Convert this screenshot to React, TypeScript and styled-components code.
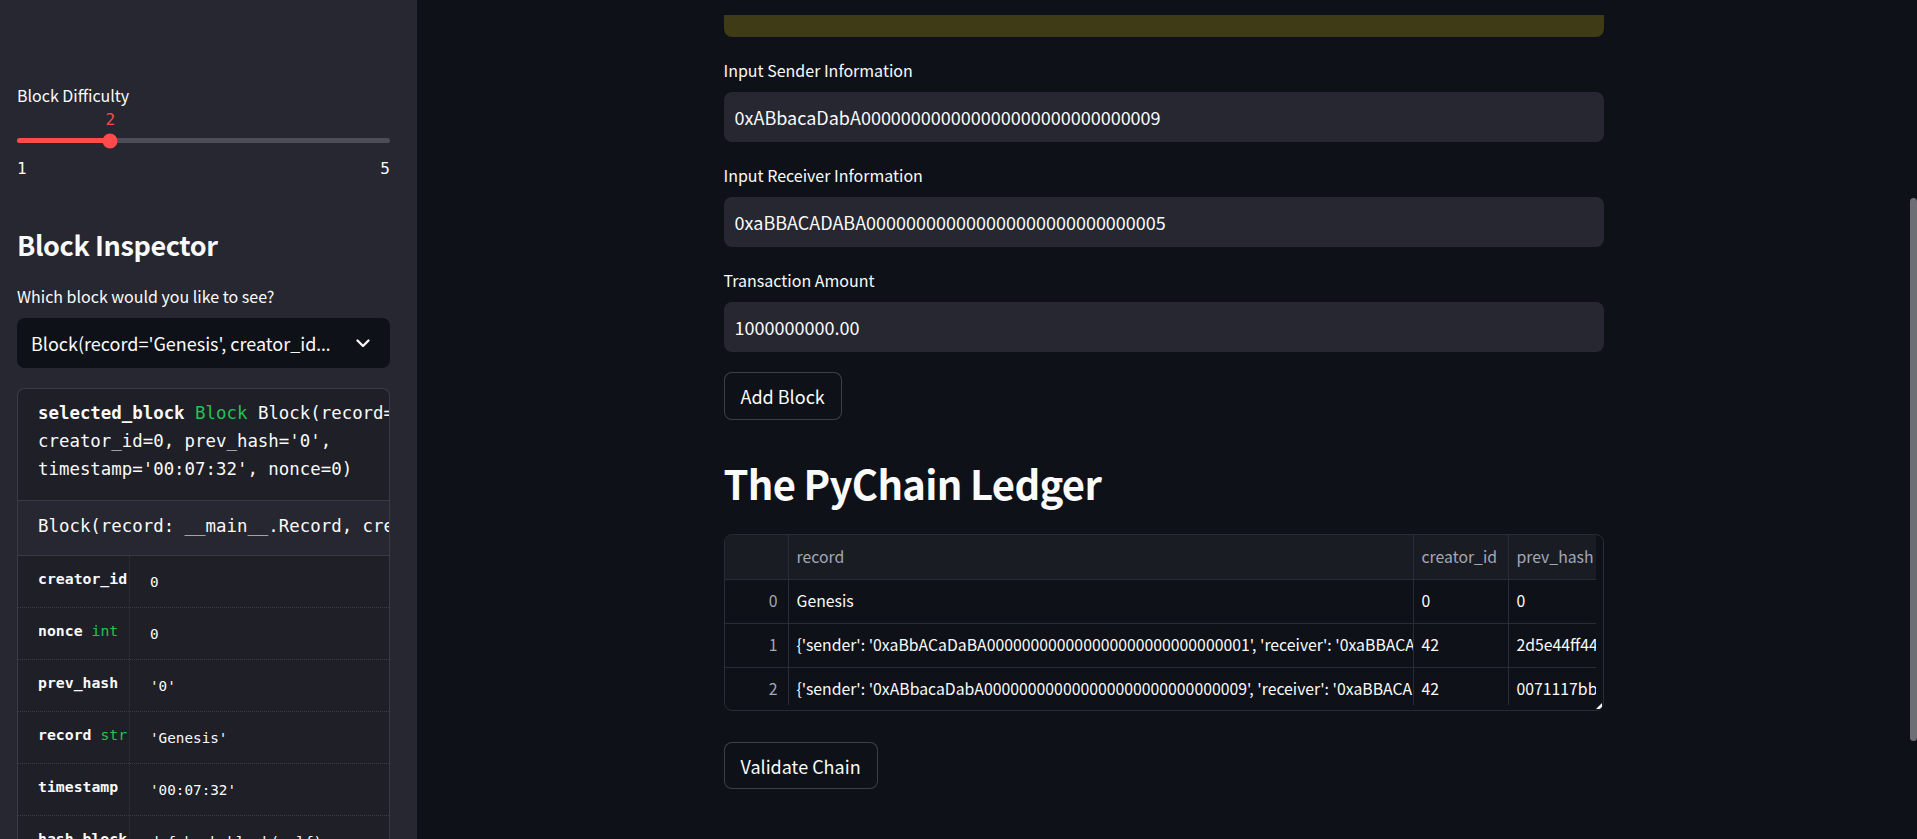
import React from "react";
import styled, { createGlobalStyle } from "styled-components";

const SANS = `"Noto Sans CJK SC", "Noto Sans", sans-serif`;
const LATIN = `"Noto Sans", "Open Sans", sans-serif`;
const MONO = `"DejaVu Sans Mono", "Liberation Mono", monospace`;

const GlobalStyle = createGlobalStyle`
  html, body { margin: 0; padding: 0; background: #0e1117; overflow: hidden; }
  body { font-family: ${SANS}; color: #fafafa; }
  #root { height: 839px; }
  * { box-sizing: border-box; }
`;

const Shell = styled.div`
  display: flex;
  width: 1917px;
  height: 839px;
  overflow: hidden;
`;

/* ---------- sidebar ---------- */

const Sidebar = styled.aside`
  width: 417px;
  flex: none;
  background: #262730;
  padding: 82px 27px 0 17px;
  display: flex;
  flex-direction: column;
  overflow: hidden;
`;

const WidgetLabel = styled.div<{ $mt?: number }>`
  font-size: 16px;
  line-height: 27px;
  color: #fafafa;
  margin-top: ${(p) => p.$mt ?? 0}px;
  margin-bottom: 8px;
  white-space: nowrap;
`;

const SliderArea = styled.div`
  padding-top: 21px;
`;

const Track = styled.div`
  position: relative;
  height: 5px;
  border-radius: 3px;
  background: #4b4d57;
`;

const TrackFill = styled.div`
  height: 100%;
  border-radius: 3px;
  background: #ff4b4b;
`;

const Thumb = styled.div`
  position: absolute;
  top: 50%;
  width: 15px;
  height: 15px;
  border-radius: 50%;
  background: #ff4b4b;
  transform: translate(-50%, -50%);
`;

const ThumbValue = styled.div`
  position: absolute;
  bottom: calc(100% + 8px);
  transform: translateX(-50%);
  font-family: ${MONO};
  font-size: 16px;
  line-height: 20px;
  color: #ff4b4b;
`;

const TickRow = styled.div`
  display: flex;
  justify-content: space-between;
  margin-top: 16px;
  font-family: ${MONO};
  font-size: 16px;
  line-height: 20px;
  color: #fafafa;
`;

const SidebarTitle = styled.h2`
  margin: 46px 0 0;
  font-size: 27px;
  font-weight: 700;
  letter-spacing: -0.4px;
  line-height: 40px;
  color: #fafafa;
`;

const SelectBox = styled.div`
  height: 50px;
  flex: none;
  border-radius: 8px;
  background: #0e1117;
  display: flex;
  align-items: center;
  justify-content: space-between;
  padding: 0 20px 0 14px;
`;

const SelectText = styled.span`
  font-size: 18px;
  white-space: nowrap;
`;

const Ellipsis = styled.span`
  font-family: ${LATIN};
`;

const Panel = styled.div`
  margin-top: 20px;
  flex: 1;
  border: 1px solid #393a44;
  border-bottom: none;
  border-radius: 8px 8px 0 0;
  background: #1e1f27;
  overflow: hidden;
  font-family: ${MONO};
`;

const PanelHead = styled.div`
  padding: 10px 0 17px 20px;
  font-size: 17.4px;
  line-height: 28px;
  white-space: pre;
`;

const Bold = styled.span`
  font-weight: 700;
`;

const TypeTag = styled.span`
  color: #21c354;
  font-weight: 400;
`;

const DocLine = styled.div`
  border-top: 1px solid #393a44;
  border-bottom: 1px solid #393a44;
  background: #262730;
  padding: 11px 0 15px 20px;
  font-size: 17.4px;
  line-height: 28px;
  white-space: pre;
`;

const MemberRow = styled.div`
  display: grid;
  grid-template-columns: 111px 1fr;
  height: 52px;
  border-bottom: 1px dotted #3a3b45;
`;

const MemberName = styled.div`
  padding: 13px 0 0 20px;
  font-size: 14.8px;
  font-weight: 700;
  line-height: 20px;
  white-space: pre;
`;

const MemberValue = styled.div`
  padding: 16px 0 0 20px;
  border-left: 1px dotted #34353f;
  font-size: 14.3px;
  line-height: 20px;
  white-space: pre;
`;

/* ---------- main ---------- */

const Main = styled.main`
  flex: 1;
  min-width: 0;
  display: flex;
`;

const MainScroll = styled.div`
  flex: 1;
  min-width: 0;
  overflow: hidden;
  display: flex;
  justify-content: center;
`;

const Column = styled.div`
  width: 880px;
  flex: none;
  padding-top: 15px;
  display: flex;
  flex-direction: column;
`;

const ScrollTrack = styled.div`
  width: 7px;
  flex: none;
`;

const ScrollThumb = styled.div`
  margin-top: 198px;
  height: 543px;
  border-radius: 4px;
  background: #6e6f74;
`;

const WarningTail = styled.div`
  height: 22px;
  border-radius: 0 0 8px 8px;
  background: #3e3b16;
`;

const Field = styled.div`
  margin-top: 20px;
  display: flex;
  flex-direction: column;
`;

const TextInput = styled.input`
  height: 50px;
  width: 100%;
  border: none;
  outline: none;
  border-radius: 8px;
  background: #262730;
  padding: 0 11px;
  font-family: ${SANS};
  font-size: 18px;
  color: #fafafa;
`;

const Button = styled.button<{ $mt?: number; $h?: number }>`
  align-self: flex-start;
  margin-top: ${(p) => p.$mt ?? 20}px;
  height: ${(p) => p.$h ?? 48}px;
  padding: 0 16px;
  border: 1px solid rgba(250, 250, 250, 0.2);
  border-radius: 8px;
  background: #0e1117;
  font-family: ${SANS};
  font-size: 18px;
  color: #fafafa;
`;

const Heading = styled.h2`
  margin: 36px 0 0;
  font-size: 40px;
  font-weight: 700;
  letter-spacing: -0.7px;
  line-height: 54px;
  color: #fafafa;
`;

const TableFrame = styled.div`
  position: relative;
  margin-top: 24px;
  height: 177px;
  border: 1px solid #2a2c35;
  border-radius: 8px;
  padding: 0 7px 5px 0;
  overflow: hidden;
`;

const Grid = styled.div`
  height: 100%;
  overflow: hidden;
  display: grid;
  grid-template-columns: 64px 625px 95px 220px;
  grid-template-rows: 45px 44px 44px 44px;
`;

const Cell = styled.div<{ $head?: boolean; $index?: boolean }>`
  border-right: 1px solid #2a2c35;
  border-bottom: 1px solid #2a2c35;
  background: ${(p) => (p.$head ? "#1a1c24" : "#0e1117")};
  color: ${(p) => (p.$head || p.$index ? "#a3a8b4" : "#fafafa")};
  padding: ${(p) => (p.$index ? "0 10px 2px 0" : "0 8px 2px 8px")};
  font-size: 15.8px;
  display: flex;
  align-items: center;
  justify-content: ${(p) => (p.$index ? "flex-end" : "flex-start")};
  white-space: nowrap;
  overflow: hidden;
`;

const ResizeHandle = styled.div`
  position: absolute;
  right: 1px;
  bottom: 1px;
  width: 0;
  height: 0;
  border-left: 6px solid transparent;
  border-bottom: 6px solid #fafafa;
`;

/* ---------- data ---------- */

const zeros = "0".repeat(29);
const senderInput = `0xABbacaDabA${zeros}9`;
const receiverInput = `0xaBBACADABA${zeros}5`;

const rows = [
  ["0", "Genesis", "0", "0"],
  [
    "1",
    `{'sender': '0xaBbACaDaBA${zeros}1', 'receiver': '0xaBBACADABA${zeros}5', 'amount': 250.0}`,
    "42",
    "2d5e44ff44b2c5e7a1",
  ],
  [
    "2",
    `{'sender': '0xABbacaDabA${zeros}9', 'receiver': '0xaBBACADABA${zeros}5', 'amount': 1000000000.0}`,
    "42",
    "0071117bb3d9a4c0e2",
  ],
];

const members: { name: string; type?: string; value: string }[] = [
  { name: "creator_id", value: "0" },
  { name: "nonce", type: "int", value: "0" },
  { name: "prev_hash", value: "'0'" },
  { name: "record", type: "str", value: "'Genesis'" },
  { name: "timestamp", value: "'00:07:32'" },
  { name: "hash_block", value: "def hash_block(self):" },
];

const Chevron = () => (
  <svg width="14" height="9" viewBox="0 0 14 9" fill="none">
    <path d="M1.5 1.5 L7 7 L12.5 1.5" stroke="#fafafa" strokeWidth="2.3" strokeLinecap="round" strokeLinejoin="round" />
  </svg>
);

export default function App() {
  const min = 1;
  const max = 5;
  const difficulty = 2;
  const pct = ((difficulty - min) / (max - min)) * 100;

  return (
    <>
      <GlobalStyle />
      <Shell>
        <Sidebar>
          <WidgetLabel>Block Difficulty</WidgetLabel>
          <SliderArea>
            <Track>
              <TrackFill style={{ width: `${pct}%` }} />
              <Thumb style={{ left: `${pct}%` }} />
              <ThumbValue style={{ left: `${pct}%` }}>{difficulty}</ThumbValue>
            </Track>
          </SliderArea>
          <TickRow>
            <span>{min}</span>
            <span>{max}</span>
          </TickRow>

          <SidebarTitle>Block Inspector</SidebarTitle>
          <WidgetLabel $mt={18}>Which block would you like to see?</WidgetLabel>
          <SelectBox>
            <SelectText>
              Block(record='Genesis', creator_id<Ellipsis>…</Ellipsis>
            </SelectText>
            <Chevron />
          </SelectBox>

          <Panel>
            <PanelHead>
              <Bold>selected_block</Bold> <TypeTag>Block</TypeTag> Block(record='Genesis',
              {"\n"}creator_id=0, prev_hash='0',
              {"\n"}timestamp='00:07:32', nonce=0)
            </PanelHead>
            <DocLine>
              Block(record: __main__.Record, creator_id: int, prev_hash: str = '0', timestamp: str)
            </DocLine>
            {members.map((m) => (
              <MemberRow key={m.name}>
                <MemberName>
                  {m.name}
                  {m.type ? (
                    <>
                      {" "}
                      <TypeTag>{m.type}</TypeTag>
                    </>
                  ) : null}
                </MemberName>
                <MemberValue>{m.value}</MemberValue>
              </MemberRow>
            ))}
          </Panel>
        </Sidebar>

        <Main>
          <MainScroll>
            <Column>
              <WarningTail />
              <Field>
                <WidgetLabel>Input Sender Information</WidgetLabel>
                <TextInput readOnly value={senderInput} />
              </Field>
              <Field>
                <WidgetLabel>Input Receiver Information</WidgetLabel>
                <TextInput readOnly value={receiverInput} />
              </Field>
              <Field>
                <WidgetLabel>Transaction Amount</WidgetLabel>
                <TextInput readOnly value="1000000000.00" />
              </Field>
              <Button>Add Block</Button>

              <Heading>The PyChain Ledger</Heading>
              <TableFrame>
                <Grid>
                  <Cell $head $index />
                  <Cell $head>record</Cell>
                  <Cell $head>creator_id</Cell>
                  <Cell $head>prev_hash</Cell>
                  {rows.map((r) => (
                    <React.Fragment key={r[0]}>
                      <Cell $index>{r[0]}</Cell>
                      <Cell>{r[1]}</Cell>
                      <Cell>{r[2]}</Cell>
                      <Cell>{r[3]}</Cell>
                    </React.Fragment>
                  ))}
                </Grid>
                <ResizeHandle />
              </TableFrame>
              <Button $mt={31} $h={47}>
                Validate Chain
              </Button>
            </Column>
          </MainScroll>
          <ScrollTrack>
            <ScrollThumb />
          </ScrollTrack>
        </Main>
      </Shell>
    </>
  );
}
